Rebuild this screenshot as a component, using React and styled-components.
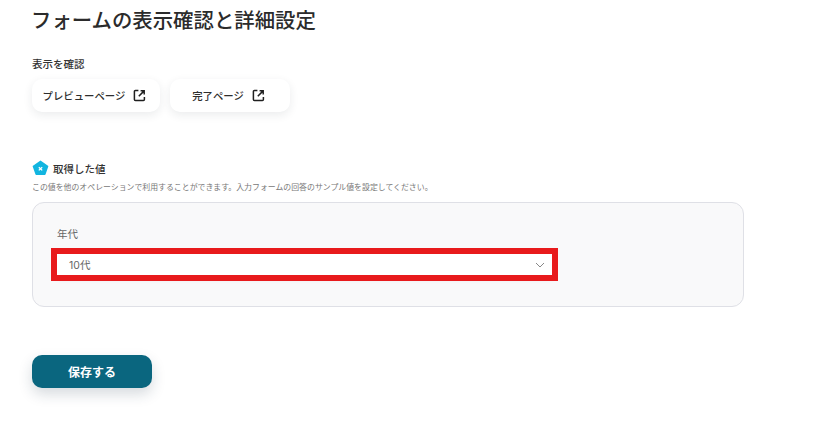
import React from 'react'
import styled, { createGlobalStyle } from 'styled-components'

const GlobalStyle = createGlobalStyle`
  html, body { margin: 0; padding: 0; background: #fff; }
  body { font-family: "Inter", "Noto Sans CJK JP", sans-serif; color: #2e2e2e; }
`

const Page = styled.div`
  width: 820px;
  height: 424px;
  padding: 8px 0 0 32px;
  box-sizing: border-box;
  overflow: hidden;
`

const Title = styled.h1`
  margin: 0 0 0 -1px;
  font-size: 20.4px;
  line-height: 26px;
  font-weight: 500;
  color: #2b2b2b;
`

const SmallLabel = styled.div`
  margin-top: 23px;
  font-size: 10.5px;
  line-height: 16px;
  font-weight: 500;
  color: #333;
`

const LinkRow = styled.div`
  display: flex;
  gap: 10px;
  margin-top: 6px;
`

const LinkButton = styled.button`
  width: ${({ $w }) => $w}px;
  height: 33px;
  padding: 0 3px 0 0;
  border: none;
  border-radius: 10px;
  background: #fff;
  box-shadow: 0 3px 10px rgba(30, 40, 60, 0.09);
  display: flex;
  align-items: center;
  justify-content: center;
  gap: 8px;
  font-family: inherit;
  font-size: 10.4px;
  font-weight: 500;
  color: #2e2e2e;
`

const Section = styled.section`
  margin-top: 48px;
`

const SectionHead = styled.div`
  display: flex;
  align-items: center;
  gap: 4px;
  height: 16px;
  font-size: 10.5px;
  font-weight: 500;
  color: #333;
`

const Description = styled.p`
  margin: 5px 0 0;
  font-size: 7.9px;
  line-height: 12px;
  color: #777;
`

const Panel = styled.div`
  width: 712px;
  height: 105px;
  margin-top: 9px;
  padding: 24px 19px 0 24px;
  box-sizing: border-box;
  border: 1px solid #dfe0e6;
  border-radius: 12px;
  background: #f9f9fa;
`

const FieldLabel = styled.div`
  font-size: 10.5px;
  line-height: 16px;
  color: #666;
`

const SelectBox = styled.div`
  position: relative;
  width: 495px;
  height: 21px;
  margin-top: 11px;
  padding: 0 7px 0 12px;
  box-sizing: border-box;
  display: flex;
  align-items: center;
  justify-content: space-between;
  background: #fff;
  font-size: 10.5px;
  color: #666;
  box-shadow: 0 4px 6px rgba(30, 40, 60, 0.08);
`

const Highlight = styled.div`
  position: absolute;
  inset: -6px;
  border: 6px solid #e81a1c;
  pointer-events: none;
`

const SaveButton = styled.button`
  display: block;
  width: 120px;
  height: 33px;
  margin-top: 48px;
  border: none;
  border-radius: 10px;
  background: #0a667f;
  box-shadow: 0 6px 14px rgba(30, 50, 70, 0.18);
  font-family: inherit;
  font-size: 12px;
  font-weight: 700;
  color: #fff;
`

const ExternalIcon = () => (
  <svg width="13" height="13" viewBox="0 0 13 13" fill="none" stroke="#1f1f1f" strokeWidth="1.5">
    <path d="M5.4 1.6H2.4a1 1 0 0 0-1 1v8a1 1 0 0 0 1 1h8a1 1 0 0 0 1-1V8" />
    <path d="M5.8 7.2 10.6 2.4M7.6 1.8h3.6v3.6" />
  </svg>
)

const ValueIcon = () => (
  <svg width="17" height="16" viewBox="0 0 17 16">
    <path d="M8.5.6 16 5.8c.3.2.4.5.3.8l-2.8 8c-.1.3-.4.5-.7.5H4.2c-.3 0-.6-.2-.7-.5L.7 6.6c-.1-.3 0-.6.3-.8z" fill="#12b5e0" />
    <path d="M6.8 7.2 10.2 10.4M10.2 7.2 6.8 10.4" stroke="#fff" strokeWidth="1.3" />
  </svg>
)

const Chevron = () => (
  <svg width="10" height="6" viewBox="0 0 10 6" fill="none" stroke="#888" strokeWidth="1">
    <path d="M1 1 5 5 9 1" />
  </svg>
)

const App = () => (
  <>
    <GlobalStyle />
    <Page>
      <Title>フォームの表示確認と詳細設定</Title>
      <SmallLabel>表示を確認</SmallLabel>
      <LinkRow>
        <LinkButton $w={128}>プレビューページ <ExternalIcon /></LinkButton>
        <LinkButton $w={120}>完了ページ <ExternalIcon /></LinkButton>
      </LinkRow>

      <Section>
        <SectionHead><ValueIcon />取得した値</SectionHead>
        <Description>この値を他のオペレーションで利用することができます。入力フォームの回答のサンプル値を設定してください。</Description>
        <Panel>
          <FieldLabel>年代</FieldLabel>
          <SelectBox>
            10代
            <Chevron />
            <Highlight />
          </SelectBox>
        </Panel>
      </Section>

      <SaveButton>保存する</SaveButton>
    </Page>
  </>
)

export default App
